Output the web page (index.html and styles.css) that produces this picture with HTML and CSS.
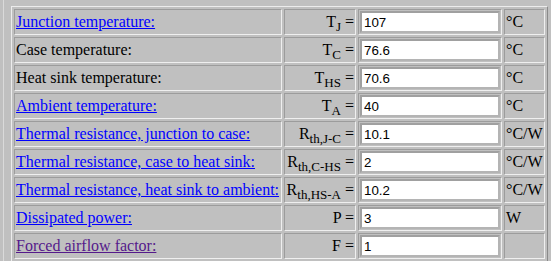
FILE: index.html
```html
<!DOCTYPE html>
<html lang="en">
<head>
  <meta charset="UTF-8">
  <title>Thermal Calculator</title>
  <link rel="stylesheet" href="styles.css">
</head>
<body>
  <div class="frame">
    <table class="calc">
      <tr>
        <td class="name"><a href="#">Junction temperature:</a></td>
        <td class="sym">T<sub>J</sub> =</td>
        <td class="val"><input type="text" value="107"></td>
        <td class="unit">°C</td>
      </tr>
      <tr>
        <td class="name">Case temperature:</td>
        <td class="sym">T<sub>C</sub> =</td>
        <td class="val"><input type="text" value="76.6"></td>
        <td class="unit">°C</td>
      </tr>
      <tr>
        <td class="name">Heat sink temperature:</td>
        <td class="sym">T<sub>HS</sub> =</td>
        <td class="val"><input type="text" value="70.6"></td>
        <td class="unit">°C</td>
      </tr>
      <tr>
        <td class="name"><a href="#">Ambient temperature:</a></td>
        <td class="sym">T<sub>A</sub> =</td>
        <td class="val"><input type="text" value="40"></td>
        <td class="unit">°C</td>
      </tr>
      <tr>
        <td class="name"><a href="#">Thermal resistance, junction to case:</a></td>
        <td class="sym">R<sub>th,J-C</sub> =</td>
        <td class="val"><input type="text" value="10.1"></td>
        <td class="unit">°C/W</td>
      </tr>
      <tr>
        <td class="name"><a href="#">Thermal resistance, case to heat sink:</a></td>
        <td class="sym">R<sub>th,C-HS</sub> =</td>
        <td class="val"><input type="text" value="2"></td>
        <td class="unit">°C/W</td>
      </tr>
      <tr>
        <td class="name"><a href="#">Thermal resistance, heat sink to ambient:</a></td>
        <td class="sym">R<sub>th,HS-A</sub> =</td>
        <td class="val"><input type="text" value="10.2"></td>
        <td class="unit">°C/W</td>
      </tr>
      <tr>
        <td class="name"><a href="#">Dissipated power:</a></td>
        <td class="sym">P =</td>
        <td class="val"><input type="text" value="3"></td>
        <td class="unit">W</td>
      </tr>
      <tr>
        <td class="name"><a href="#" class="visited">Forced airflow factor:</a></td>
        <td class="sym">F =</td>
        <td class="val"><input type="text" value="1"></td>
        <td class="unit"></td>
      </tr>
    </table>
  </div>
</body>
</html>
```

FILE: styles.css
```css
body {
  margin: 0;
  background-color: #c0c0c0;
  font-family: "Liberation Serif", "Times New Roman", serif;
  font-size: 16px;
  color: #000000;
}

.frame {
  margin-left: 3px;
  border-left: 1px solid #dadada;
  padding: 6px 0 0 7px;
  min-height: 261px;
  box-sizing: border-box;
}

.calc {
  border-collapse: separate;
  border-spacing: 2px;
  border: 1px solid;
  border-color: #ececec #8a8a8a #8a8a8a #ececec;
}

.calc td {
  box-sizing: border-box;
  border: 1px solid;
  border-color: #9c9c9c #efefef #efefef #9c9c9c;
  padding: 1px;
  height: 26px;
  white-space: nowrap;
}

.name {
  width: 268px;
}

.sym {
  width: 72px;
  text-align: right;
}

.val {
  width: 143px;
}

.unit {
  width: 41px;
}

a {
  color: #0000ff;
}

a.visited {
  color: #551a8b;
}

sub {
  font-size: 13px;
  line-height: 0;
}

input {
  display: block;
  box-sizing: border-box;
  width: 140px;
  height: 22px;
  margin: 0;
  padding: 1px 2px;
  border: 2px solid;
  border-color: #a0a0a0 #b4b4b4 #b4b4b4 #a0a0a0;
  background: #ffffff;
  font-family: "Liberation Sans", Arial, sans-serif;
  font-size: 13.33px;
  color: #000000;
}
```
